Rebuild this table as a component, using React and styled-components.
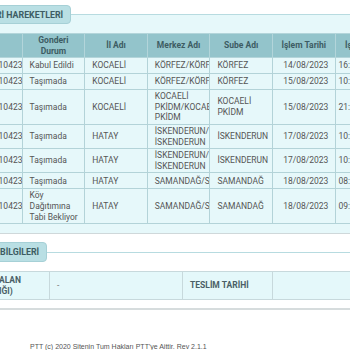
import React from "react";
import styled, { createGlobalStyle } from "styled-components";

const GlobalStyle = createGlobalStyle`
  html, body {
    margin: 0;
    padding: 0;
    background: #fff;
    overflow: hidden;
  }
  body {
    font-family: Roboto, "Noto Sans", sans-serif;
  }
`;

const rows = [
  { no: "KP2303010423TR", durum: "Kabul Edildi", il: "KOCAELİ", merkez: "KÖRFEZ/KÖRFEZ", sube: "KÖRFEZ", tarih: "14/08/2023", saat: "16:42" },
  { no: "KP2303010423TR", durum: "Taşımada", il: "KOCAELİ", merkez: "KÖRFEZ/KÖRFEZ", sube: "KÖRFEZ", tarih: "15/08/2023", saat: "10:15" },
  { no: "KP2303010423TR", durum: "Taşımada", il: "KOCAELİ", merkez: "KOCAELİ PKİDM/KOCAELİ PKİDM", sube: "KOCAELİ PKİDM", tarih: "15/08/2023", saat: "21:30" },
  { no: "KP2303010423TR", durum: "Taşımada", il: "HATAY", merkez: "İSKENDERUN/ İSKENDERUN", sube: "İSKENDERUN", tarih: "17/08/2023", saat: "10:05" },
  { no: "KP2303010423TR", durum: "Taşımada", il: "HATAY", merkez: "İSKENDERUN/ İSKENDERUN", sube: "İSKENDERUN", tarih: "17/08/2023", saat: "10:48" },
  { no: "KP2303010423TR", durum: "Taşımada", il: "HATAY", merkez: "SAMANDAĞ/SAMANDAĞ", sube: "SAMANDAĞ", tarih: "18/08/2023", saat: "08:20" },
  { no: "KP2303010423TR", durum: "Köy Dağıtımına Tabi Bekliyor", il: "HATAY", merkez: "SAMANDAĞ/SAMANDAĞ", sube: "SAMANDAĞ", tarih: "18/08/2023", saat: "09:12" },
];

const App = () => {
  return (
    <>
      <GlobalStyle />
      <Page>
        <Tab>GÖNDERİ HAREKETLERİ</Tab>
        <Panel>
          <Table>
            <colgroup>
              {Array.from({ length: 7 }, (_, i) => (
                <col key={i} style={{ width: 62.6 }} />
              ))}
            </colgroup>
            <thead>
              <tr>
                <Th>No</Th>
                <Th>Gonderi Durum</Th>
                <Th>İl Adı</Th>
                <Th>Merkez Adı</Th>
                <Th>Sube Adı</Th>
                <Th>İşlem Tarihi</Th>
                <Th>İşlem Saati</Th>
              </tr>
            </thead>
            <tbody>
              {rows.map((r, i) => (
                <Tr key={i}>
                  <Td $nowrap $pad={4}>{r.no}</Td>
                  <Td>{r.durum}</Td>
                  <Td>{r.il}</Td>
                  <Td>{r.merkez}</Td>
                  <Td>{r.sube}</Td>
                  <Td $center>{r.tarih}</Td>
                  <Td $pad={3}>{r.saat}</Td>
                </Tr>
              ))}
            </tbody>
          </Table>
        </Panel>

        <Tab $gap={8}>TESLİM BİLGİLERİ</Tab>
        <InfoPanel>
          <InfoTable>
            <colgroup>
              <col style={{ width: 90 }} />
              <col style={{ width: 133 }} />
              <col style={{ width: 90 }} />
              <col style={{ width: 140 }} />
            </colgroup>
            <tbody>
              <tr>
                <InfoCell $bold>TESLİM ALAN (YAKINLIĞI)</InfoCell>
                <InfoCell>-</InfoCell>
                <InfoCell $bold>TESLİM TARİHİ</InfoCell>
                <InfoCell></InfoCell>
              </tr>
            </tbody>
          </InfoTable>
        </InfoPanel>

        <Footer>PTT (c) 2020 Sitenin Tum Hakları PTT'ye Aittir. Rev 2.1.1</Footer>
      </Page>
    </>
  );
};

const Page = styled.div`
  width: 480px;
  margin-left: -48px;
  padding-top: 3px;
`;

const Tab = styled.div`
  position: relative;
  z-index: 1;
  display: inline-block;
  margin-left: 8px;
  margin-top: ${(props) => props.$gap || 0}px;
  height: ${(props) => (props.$gap ? 20 : 19)}px;
  line-height: 18px;
  padding: 0 7px 0 6px;
  background: #b9dfe4;
  border: 1px solid #a6d0d6;
  border-radius: 4px;
  box-sizing: border-box;
  font-size: 8.8px;
  font-weight: 700;
  color: #3d5c63;
`;

const Panel = styled.div`
  margin-top: -10px;
  padding: 18px 7px 9px;
  background: #e6f8fa;
  border-top: 1px solid #b7dbe0;
  border-bottom: 1px solid #cfd8da;
`;

const Table = styled.table`
  border-collapse: collapse;
  table-layout: fixed;
  width: 438px;
`;

const Th = styled.th`
  background: #93c4cb;
  border: 1px solid #b3d5da;
  padding: 1px 4px;
  line-height: 10.6px;
  height: 21px;
  font-size: 8.5px;
  font-weight: 700;
  color: #3d5c63;
  text-align: center;
`;

const Tr = styled.tr`
  height: 16px;
`;

const Td = styled.td`
  border: 1px solid #b3d3d8;
  padding: 1px 3px 1px ${(props) => (props.$pad !== undefined ? props.$pad : 7)}px;
  line-height: 10.6px;
  font-size: 8.5px;
  color: #555;
  text-align: ${(props) => (props.$center ? "center" : "left")};
  white-space: ${(props) => (props.$nowrap ? "nowrap" : "normal")};
  overflow: hidden;
  vertical-align: middle;
`;

const InfoPanel = styled.div`
  margin-top: -10px;
  padding: 18px 7px 8px;
  background: #fff;
  border-top: 1px solid #b7dbe0;
  border-bottom: 2px solid #d6dcdd;
`;

const InfoTable = styled.table`
  border-collapse: collapse;
  table-layout: fixed;
  width: 453px;
`;

const InfoCell = styled.td`
  height: 25px;
  padding: 1px 7px;
  background: #e4f8fa;
  border: 1px solid #c7d9dc;
  line-height: 11px;
  font-size: 8.5px;
  font-weight: ${(props) => (props.$bold ? 700 : 400)};
  color: ${(props) => (props.$bold ? "#4a5f66" : "#777")};
  vertical-align: middle;
  overflow: hidden;
`;

const Footer = styled.div`
  margin-top: 33px;
  padding-left: 78px;
  font-family: "Liberation Sans", Arial, sans-serif;
  font-size: 7px;
  color: #555;
`;

export default App;
